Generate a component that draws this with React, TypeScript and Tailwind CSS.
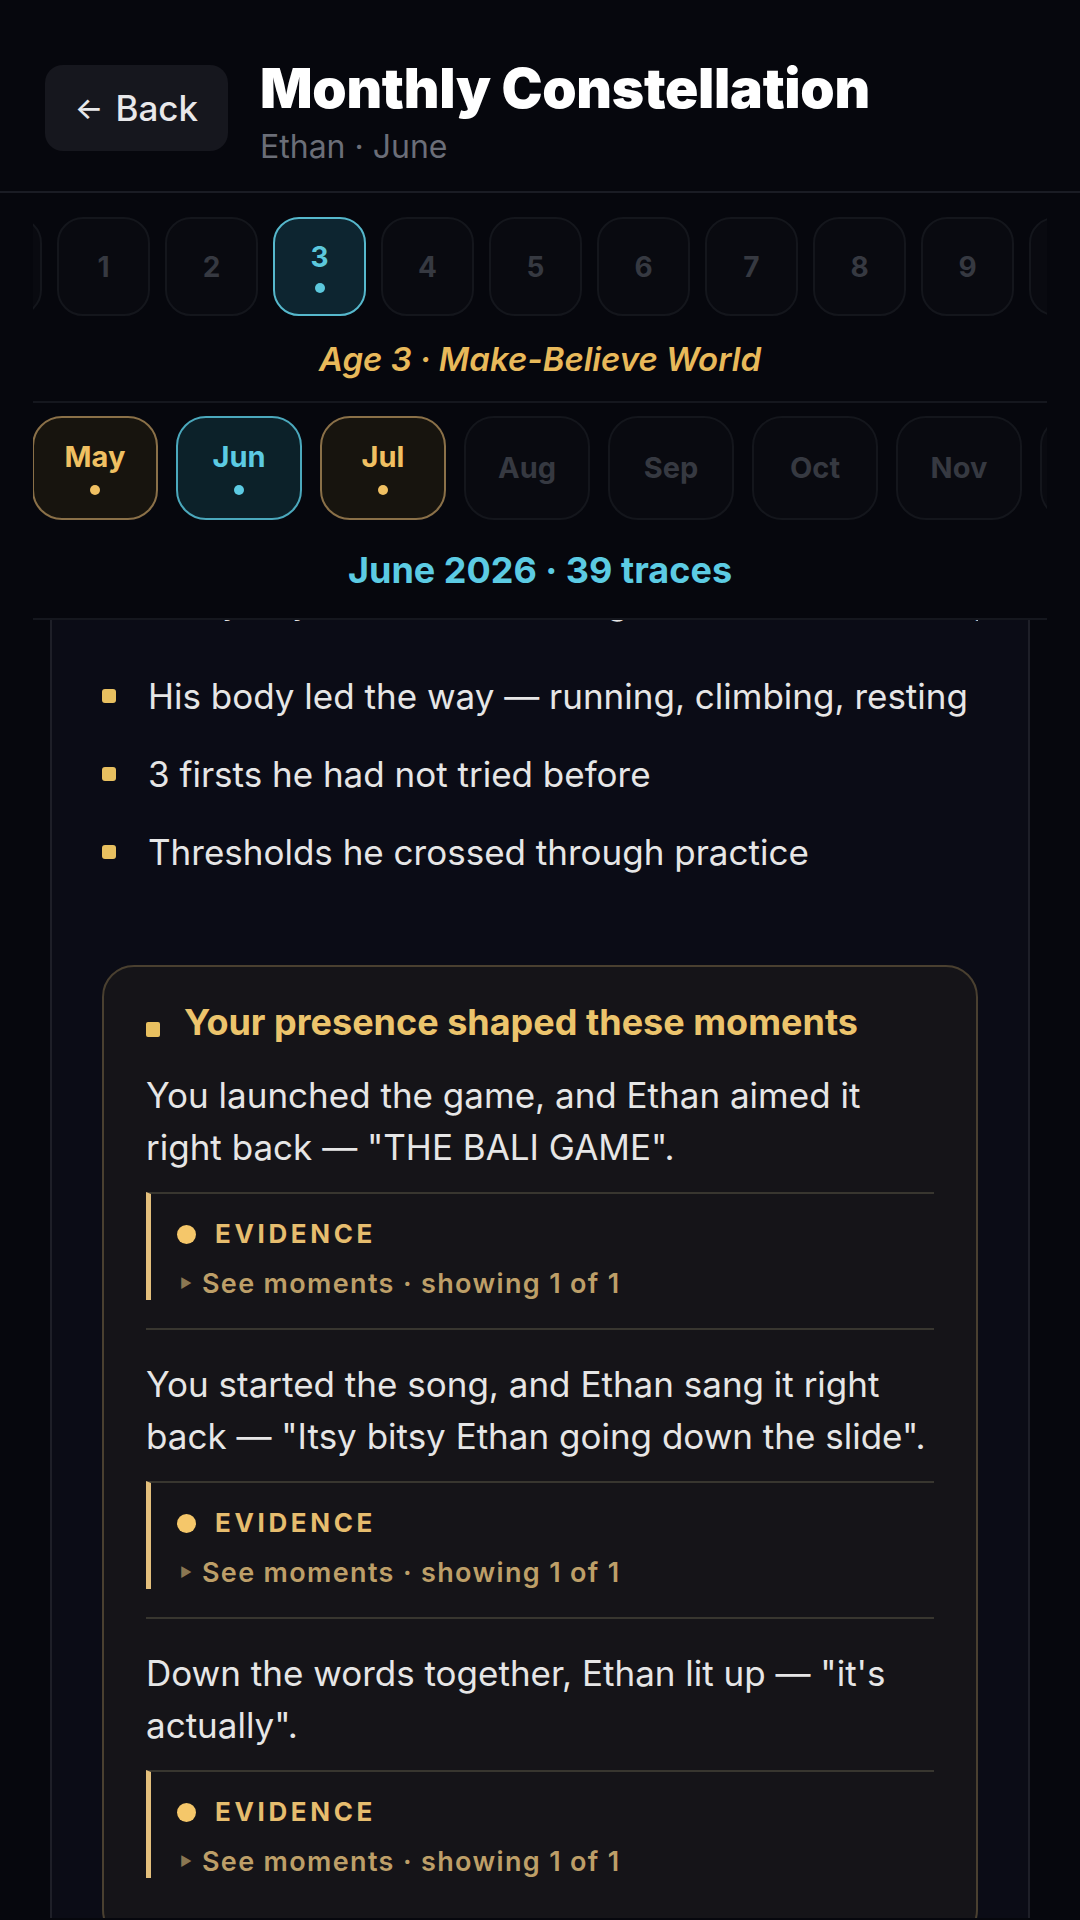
const font = "font-['Inter','Noto_Sans',sans-serif]";

const ages = [0, 1, 2, 3, 4, 5, 6, 7, 8, 9, 10];

type Tone = 'gold' | 'cyan' | 'off';

const months: { label: string; tone: Tone }[] = [
  { label: 'May', tone: 'gold' },
  { label: 'Jun', tone: 'cyan' },
  { label: 'Jul', tone: 'gold' },
  { label: 'Aug', tone: 'off' },
  { label: 'Sep', tone: 'off' },
  { label: 'Oct', tone: 'off' },
  { label: 'Nov', tone: 'off' },
  { label: 'Dec', tone: 'off' },
];

const monthStyles: Record<Tone, { box: string; text: string; dot: string }> = {
  gold: { box: 'border-[#8a7048] bg-[#17140e]', text: 'text-[#f0c062]', dot: 'bg-[#f0c062]' },
  cyan: { box: 'border-[#4ba8bc] bg-[#0c2129]', text: 'text-[#5ccbe3]', dot: 'bg-[#5ccbe3]' },
  off: { box: 'border-[#14161c] bg-[#090a10]', text: 'text-[#363941]', dot: '' },
};

const highlights = [
  'His body led the way — running, climbing, resting',
  '3 firsts he had not tried before',
  'Thresholds he crossed through practice',
];

const moments = [
  'You launched the game, and Ethan aimed it right back — "THE BALI GAME".',
  'You started the song, and Ethan sang it right back — "Itsy bitsy Ethan going down the slide".',
  'Down the words together, Ethan lit up — "it\'s actually".',
];

function AgePill({ age }: { age: number }) {
  const active = age === 3;
  return (
    <div
      className={`flex h-[99px] w-[93px] shrink-0 flex-col items-center justify-center rounded-[26px] border-2 ${
        active ? 'border-[#56b8cc] bg-[#0d2530]' : 'border-[#14161c] bg-[#090a10]'
      }`}
    >
      <span className={`text-[28px] leading-[32px] font-bold ${active ? 'text-[#5cc8dc]' : 'text-[#363941]'}`}>{age}</span>
      {active && <span className="mt-[10px] h-[10px] w-[10px] rounded-full bg-[#5cc8dc]" />}
    </div>
  );
}

function MonthPill({ label, tone }: { label: string; tone: Tone }) {
  const s = monthStyles[tone];
  return (
    <div className={`flex h-[104px] w-[126px] shrink-0 flex-col items-center justify-center rounded-[30px] border-2 ${s.box}`}>
      <span className={`text-[29px] leading-[32px] font-bold ${s.text}`}>{label}</span>
      {tone !== 'off' && <span className={`mt-[12px] h-[10px] w-[10px] rounded-full ${s.dot}`} />}
    </div>
  );
}

function Evidence() {
  return (
    <div className="mt-[19px] border-t-2 border-l-[5px] border-t-[#38362f] border-l-[#e3bf7c] pt-[25px] pl-[26px]">
      <div className="flex h-[30px] items-center gap-[19px]">
        <span className="h-[19px] w-[19px] rounded-full bg-[#f5c76a]" />
        <span className="text-[26px] leading-[30px] font-bold tracking-[0.14em] text-[#e6bd6e]">EVIDENCE</span>
      </div>
      <div className="mt-[19px] flex h-[32px] items-center">
        <span className="mr-[10px] ml-[3px] text-[13px] text-[#8a7752]">▶</span>
        <span className="text-[27px] leading-[32px] font-semibold tracking-[0.05em] text-[#bd9f68]">
          See moments · showing 1 of 1
        </span>
      </div>
    </div>
  );
}

export default function App() {
  return (
    <div className={`${font} h-[1920px] w-[1080px] overflow-hidden bg-[#06070d]`}>
      <header className="flex h-[193px] items-start border-b-2 border-[#1a1c24] px-[45px] pt-[58px]">
        <button className="mt-[7px] flex h-[86px] w-[183px] items-center justify-center gap-[12px] rounded-[18px] bg-[#16171e] text-[35px] font-medium text-[#e8e8ea]">
          <span className="text-[30px]">←</span>
          <span>Back</span>
        </button>
        <div className="ml-[32px] flex flex-col">
          <h1 className="text-[55px] leading-[60px] font-black tracking-[-0.005em] text-white">Monthly Constellation</h1>
          <p className="mt-[11px] text-[32px] leading-[36px] text-[#6b6e78]">Ethan · June</p>
        </div>
      </header>

      <section className="px-[33px]">
        <div className="mt-[24px] overflow-hidden">
          <div className="ml-[-84px] flex gap-[15px]">
            {ages.map(a => (
              <AgePill key={a} age={a} />
            ))}
          </div>
        </div>

        <p className="mt-[23px] text-center text-[33px] leading-[40px] font-semibold italic text-[#e8b95a]">
          Age 3 · Make-Believe World
        </p>

        <div className="mt-[22px] border-t-2 border-[#15171e]" />

        <div className="mt-[13px] overflow-hidden">
          <div className="ml-[-1px] flex gap-[18px]">
            {months.map(m => (
              <MonthPill key={m.label} label={m.label} tone={m.tone} />
            ))}
          </div>
        </div>

        <p className="mt-[30px] text-center text-[36px] leading-[40px] font-bold text-[#5ccbe3]">June 2026 · 39 traces</p>

        <div className="mt-[28px] border-t-2 border-[#15171e]" />
      </section>

      <main className="h-[1298px] overflow-hidden">
        <div className="mx-[50px] border-x-2 border-[#1e1f28] bg-[#0b0c16] px-[50px] pb-[40px]">
          {/* last line of the paragraph scrolled under the header */}
          <p className="-mt-[43px] overflow-hidden pl-[46px] text-[35px] leading-[48px] whitespace-nowrap text-[#e6e6e6]">
            Every day, he tried new things at home and in the park
          </p>

          <ul className="mt-[47px] flex flex-col gap-[30px]">
            {highlights.map(h => (
              <li key={h} className="flex h-[48px] items-center gap-[32px]">
                <span className="h-[14px] w-[14px] shrink-0 rounded-[3px] bg-[#e8c060]" />
                <span className="text-[35px] leading-[48px] text-[#e6e6e6]">{h}</span>
              </li>
            ))}
          </ul>

          <div className="mt-[89px] rounded-[32px] border-2 border-[#4a4030] bg-[#151418] px-[42px] pt-[35px] pb-[34px]">
            <div className="flex items-start gap-[24px]">
              <span className="mt-[20px] h-[15px] w-[14px] shrink-0 rounded-[2px] bg-[#e8c060]" />
              <h2 className="text-[36px] leading-[40px] font-bold text-[#ecc46c]">Your presence shaped these moments</h2>
            </div>

            {moments.map((m, i) => (
              <div key={i} className={i === 0 ? 'pt-[27px] pb-[28px]' : 'border-t-2 border-[#38362f] pt-[28px] pb-[28px]'}>
                <p className="text-[35px] leading-[52px] text-[#e6e6e6]">{m}</p>
                <Evidence />
              </div>
            ))}
          </div>
        </div>
      </main>
    </div>
  );
}
